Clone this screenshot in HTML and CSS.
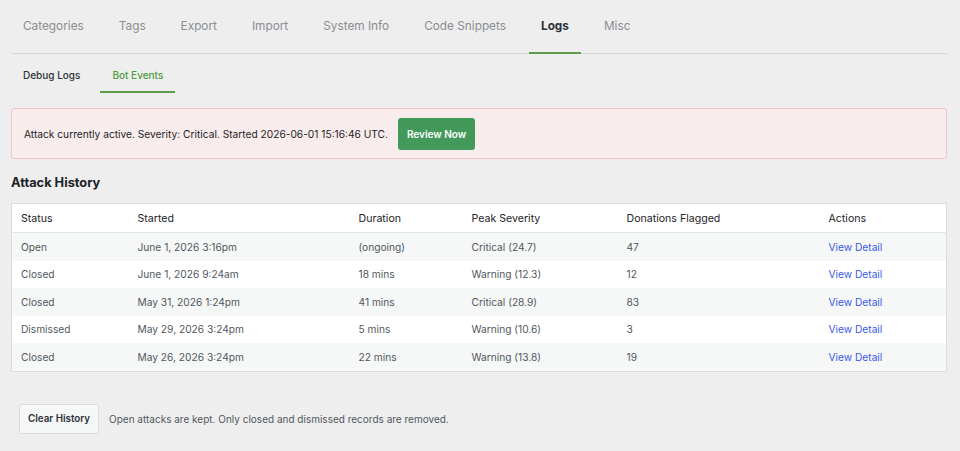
FILE: index.html
```html
<!DOCTYPE html>
<html lang="en">
<head>
  <meta charset="UTF-8">
  <meta name="viewport" content="width=device-width, initial-scale=1.0">
  <title>Logs - Bot Events</title>
  <link rel="stylesheet" href="styles.css">
</head>
<body>

<div class="wrap">
  <nav class="main-tabs">
    <a href="#">Categories</a>
    <a href="#">Tags</a>
    <a href="#">Export</a>
    <a href="#">Import</a>
    <a href="#">System Info</a>
    <a href="#">Code Snippets</a>
    <a href="#" class="active">Logs</a>
    <a href="#">Misc</a>
  </nav>

  <nav class="sub-tabs">
    <a href="#">Debug Logs</a>
    <a href="#" class="active">Bot Events</a>
  </nav>

  <div class="alert">
    <span>Attack currently active. Severity: Critical. Started 2026-06-01 15:16:46 UTC.</span>
    <button class="btn-review">Review Now</button>
  </div>

  <h2>Attack History</h2>

  <table class="history">
    <colgroup>
      <col style="width:117px">
      <col style="width:221px">
      <col style="width:113px">
      <col style="width:155px">
      <col style="width:202px">
      <col>
    </colgroup>
    <thead>
      <tr>
        <th>Status</th>
        <th>Started</th>
        <th>Duration</th>
        <th>Peak Severity</th>
        <th>Donations Flagged</th>
        <th>Actions</th>
      </tr>
    </thead>
    <tbody>
      <tr>
        <td>Open</td>
        <td>June 1, 2026 3:16pm</td>
        <td>(ongoing)</td>
        <td>Critical (24.7)</td>
        <td>47</td>
        <td><a href="#">View Detail</a></td>
      </tr>
      <tr>
        <td>Closed</td>
        <td>June 1, 2026 9:24am</td>
        <td>18 mins</td>
        <td>Warning (12.3)</td>
        <td>12</td>
        <td><a href="#">View Detail</a></td>
      </tr>
      <tr>
        <td>Closed</td>
        <td>May 31, 2026 1:24pm</td>
        <td>41 mins</td>
        <td>Critical (28.9)</td>
        <td>83</td>
        <td><a href="#">View Detail</a></td>
      </tr>
      <tr>
        <td>Dismissed</td>
        <td>May 29, 2026 3:24pm</td>
        <td>5 mins</td>
        <td>Warning (10.6)</td>
        <td>3</td>
        <td><a href="#">View Detail</a></td>
      </tr>
      <tr>
        <td>Closed</td>
        <td>May 26, 2026 3:24pm</td>
        <td>22 mins</td>
        <td>Warning (13.8)</td>
        <td>19</td>
        <td><a href="#">View Detail</a></td>
      </tr>
    </tbody>
  </table>

  <div class="clear-row">
    <button class="btn-clear">Clear History</button>
    <span class="note">Open attacks are kept. Only closed and dismissed records are removed.</span>
  </div>
</div>

</body>
</html>
```

FILE: styles.css
```css
body {
  margin: 0;
  padding: 0;
  font-family: Inter, "Noto Sans", Arial, sans-serif;
  background-color: #eeeeee;
  color: #1d2327;
}

.wrap {
  padding: 0 13px 0 11px;
}

.main-tabs {
  display: flex;
  gap: 11px;
  border-bottom: 1px solid #d6d6d6;
  height: 54px;
  box-sizing: border-box;
}

.main-tabs a {
  display: flex;
  align-items: center;
  padding: 0 12px 1px;
  font-size: 11.8px;
  color: #8a8d92;
  text-decoration: none;
  border-bottom: 2px solid transparent;
  margin-bottom: -1px;
}

.main-tabs a.active {
  color: #2c3338;
  font-weight: 700;
  border-bottom-color: #5c9d4e;
}

.sub-tabs {
  display: flex;
  gap: 8px;
  height: 39px;
  margin-bottom: 15px;
}

.sub-tabs a {
  display: flex;
  align-items: center;
  padding: 5px 12px 0;
  font-size: 10px;
  font-weight: 500;
  color: #2c3338;
  text-decoration: none;
  border-bottom: 2px solid transparent;
}

.sub-tabs a.active {
  color: #4f9a42;
  border-bottom-color: #5c9d4e;
}

.alert {
  display: flex;
  align-items: center;
  gap: 10px;
  height: 51px;
  box-sizing: border-box;
  padding: 0 12px;
  background-color: #f8ecec;
  border: 1px solid #efc6c6;
  border-radius: 3px;
  font-size: 10.2px;
  color: #1d2327;
}

.btn-review {
  height: 32px;
  padding: 0 9px;
  background-color: #43995a;
  color: white;
  border: none;
  border-radius: 3px;
  font-family: inherit;
  font-size: 10px;
  font-weight: 600;
  cursor: pointer;
}

h2 {
  margin: 15px 0 11px;
  font-size: 12.8px;
  font-weight: 700;
  line-height: 18px;
}

.history {
  width: 100%;
  table-layout: fixed;
  border-collapse: collapse;
  background-color: white;
  border: 1px solid #dcdcde;
  font-size: 10.2px;
}

.history th {
  height: 28px;
  padding: 0 9px;
  text-align: left;
  font-weight: 400;
  font-size: 10.6px;
  color: #1d2327;
  border-bottom: 1px solid #e2e4e7;
}

.history td {
  height: 27.5px;
  padding: 0 9px;
  color: #50575e;
}

.history tbody tr:nth-child(odd) {
  background-color: #f6f7f7;
}

.history a {
  color: #3858e9;
  text-decoration: none;
}

.clear-row {
  display: flex;
  align-items: center;
  gap: 10px;
  margin-top: 32px;
  padding-left: 8px;
}

.btn-clear {
  height: 30px;
  padding: 0 8px;
  background-color: #f6f7f7;
  border: 1px solid #dcdcde;
  border-radius: 3px;
  font-family: inherit;
  font-size: 9.8px;
  font-weight: 600;
  color: #2c3338;
}

.note {
  font-size: 10px;
  color: #50575e;
}
```
